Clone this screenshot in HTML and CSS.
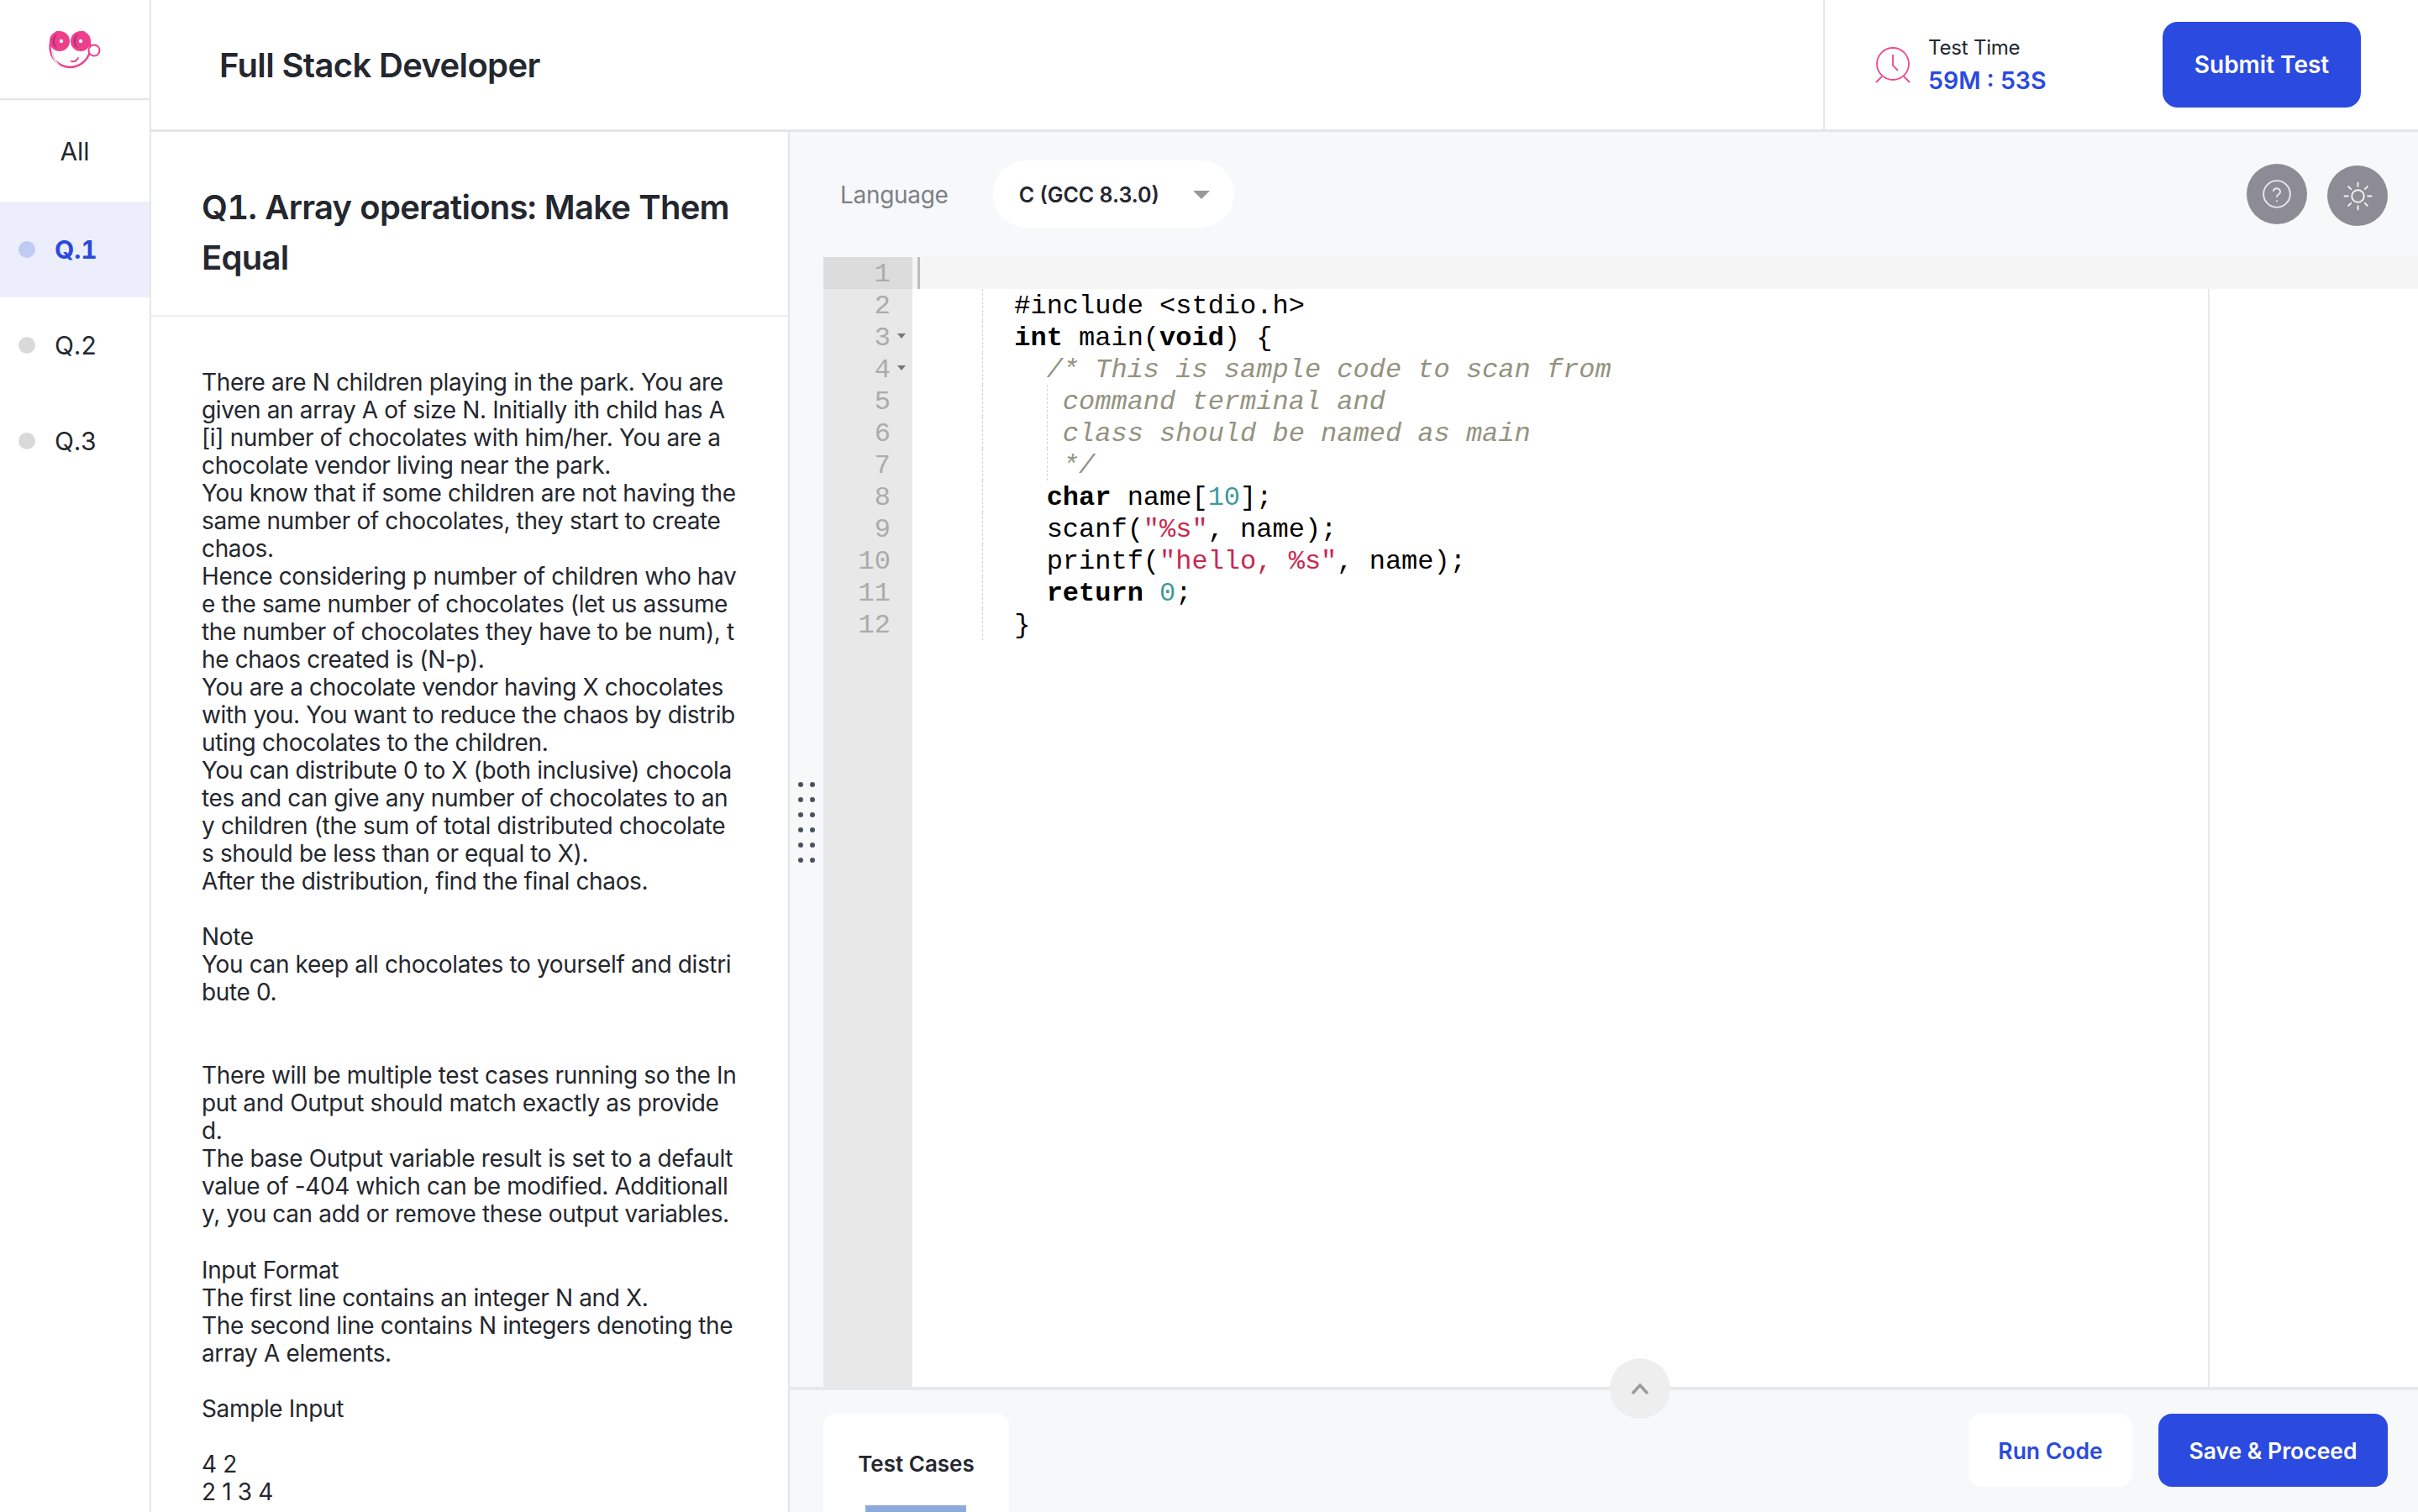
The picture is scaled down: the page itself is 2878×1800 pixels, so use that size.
FILE: index.html
```html
<!DOCTYPE html>
<html lang="en">
<head>
  <meta charset="UTF-8" />
  <title>Full Stack Developer - Test</title>
  <link rel="stylesheet" href="styles.css">
</head>
<body>
  <div class="app">
    <aside class="sidebar">
      <div class="logo">
        <svg width="62" height="45" viewBox="0 0 62 45">
          <circle cx="25.5" cy="19" r="24" fill="#fff" stroke="#ee3f8c" stroke-width="2.4" />
          <path d="M3.5 24c0 9 5 15 11 17.500c-5-4-8-10-8.500-17.500z" fill="#e4e4e4" />
          <circle cx="54" cy="23" r="6.500" fill="#fff" stroke="#ee3f8c" stroke-width="2" />
          <circle cx="13" cy="12" r="12" fill="#ee3f8c" />
          <circle cx="38" cy="12" r="12" fill="#ee3f8c" />
          <path d="M11 3a9.500 9.500 0 0 0 0 18a12 12 0 0 1 0-18z" fill="#b32f77" />
          <path d="M36 3a9.500 9.500 0 0 0 0 18a12 12 0 0 1 0-18z" fill="#b32f77" />
          <circle cx="15" cy="12" r="2.200" fill="#fff" />
          <circle cx="38" cy="12" r="2.200" fill="#fff" />
          <path d="M27 36c3 1 6-.500 8-4" fill="none" stroke="#ee3f8c" stroke-width="2" stroke-linecap="round" />
        </svg>
      </div>
      <div class="nav-all">All</div>
      <div class="nav-item active"><span class="dot"></span>Q.1</div>
      <div class="nav-item"><span class="dot"></span>Q.2</div>
      <div class="nav-item"><span class="dot"></span>Q.3</div>
    </aside>

    <div class="main">
      <header class="topbar">
        <h1 class="page-title">Full Stack Developer</h1>
        <div class="timer">
          <svg class="clock" width="42" height="44" viewBox="0 0 42 44" fill="none" stroke="#ec4a8c" stroke-width="1.800">
            <circle cx="21" cy="20" r="19" />
            <path d="M21 9v13l6 6" />
            <path d="M8 35l-7 7M34 35l7 7" />
          </svg>
          <div class="timer-text">
            <div class="timer-label">Test Time</div>
            <div class="timer-value">59M : 53S</div>
          </div>
          <button class="btn btn-primary btn-submit">Submit Test</button>
        </div>
      </header>

      <div class="workspace">
        <section class="question">
          <h2 class="question-title">Q1. Array operations: Make Them Equal</h2>
          <div class="question-body">There are N children playing in the park. You are given an array A of size N. Initially ith child has A[i] number of chocolates with him/her. You are a chocolate vendor living near the park.
You know that if some children are not having the same number of chocolates, they start to create chaos.
Hence considering p number of children who have the same number of chocolates (let us assume the number of chocolates they have to be num), the chaos created is (N-p).
You are a chocolate vendor having X chocolates with you. You want to reduce the chaos by distributing chocolates to the children.
You can distribute 0 to X (both inclusive) chocolates and can give any number of chocolates to any children (the sum of total distributed chocolates should be less than or equal to X).
After the distribution, find the final chaos.

Note
You can keep all chocolates to yourself and distribute 0.


There will be multiple test cases running so the Input and Output should match exactly as provided.
The base Output variable result is set to a default value of -404 which can be modified. Additionally, you can add or remove these output variables.

Input Format
The first line contains an integer N and X.
The second line contains N integers denoting the array A elements.

Sample Input

4 2
2 1 3 4</div>
        </section>

        <section class="editor-pane">
          <div class="drag-handle">
            <i></i><i></i><i></i><i></i><i></i><i></i><i></i><i></i><i></i><i></i><i></i><i></i>
          </div>

          <div class="toolbar">
            <span class="lang-label">Language</span>
            <div class="lang-select">C (GCC 8.3.0)<span class="caret"></span></div>
            <div class="round-btns">
              <div class="round-btn">
                <svg width="38" height="38" viewBox="0 0 24 24" fill="none" stroke="#e9e9ef" stroke-width="1.200" stroke-linecap="round">
                  <circle cx="12" cy="12" r="10" />
                  <path d="M9.400 9.500a2.700 2.700 0 0 1 5.200 .8c0 1.800-2.600 2.200-2.600 3.700" />
                  <path d="M12 17.200v.1" />
                </svg>
              </div>
              <div class="round-btn sun">
                <svg width="35" height="35" viewBox="0 0 24 24" fill="none" stroke="#f4f4f6" stroke-width="1.300" stroke-linecap="round">
                  <circle cx="12" cy="12" r="5" />
                  <path d="M12 1v3M12 20v3M4.200 4.200l2.100 2.100M17.700 17.700l2.100 2.100M1 12h3M20 12h3M4.200 19.800l2.100-2.100M17.700 6.300l2.100-2.100" />
                </svg>
              </div>
            </div>
          </div>

          <div class="editor">
            <div class="gutter">
              <div class="gutter-row current">1</div>
              <div class="gutter-row">2</div>
              <div class="gutter-row fold">3</div>
              <div class="gutter-row fold">4</div>
              <div class="gutter-row">5</div>
              <div class="gutter-row">6</div>
              <div class="gutter-row">7</div>
              <div class="gutter-row">8</div>
              <div class="gutter-row">9</div>
              <div class="gutter-row">10</div>
              <div class="gutter-row">11</div>
              <div class="gutter-row">12</div>
            </div>
            <div class="code">
              <div class="print-margin"></div>
              <div class="line line-active"><span class="cursor"></span></div>
              <div class="line"><span class="guide">    </span>  #include &lt;stdio.h&gt;</div>
              <div class="line"><span class="guide">    </span>  <b>int</b> main(<b>void</b>) {</div>
              <div class="line"><span class="guide">    </span>    <span class="cm">/* This is sample code to scan from</span></div>
              <div class="line"><span class="guide">    </span><span class="guide">    </span><span class="cm"> command terminal and</span></div>
              <div class="line"><span class="guide">    </span><span class="guide">    </span><span class="cm"> class should be named as main</span></div>
              <div class="line"><span class="guide">    </span><span class="guide">    </span><span class="cm"> */</span></div>
              <div class="line"><span class="guide">    </span>    <b>char</b> name[<span class="num">10</span>];</div>
              <div class="line"><span class="guide">    </span>    scanf(<span class="str">"%s"</span>, name);</div>
              <div class="line"><span class="guide">    </span>    printf(<span class="str">"hello, %s"</span>, name);</div>
              <div class="line"><span class="guide">    </span>    <b>return</b> <span class="num">0</span>;</div>
              <div class="line"><span class="guide">    </span>  }</div>
            </div>
          </div>

          <div class="bottom">
            <div class="collapse-btn">
              <svg width="22" height="14" viewBox="0 0 22 14" fill="none" stroke="#9a9a9a" stroke-width="3.500"><path d="M2 13l9-10 9 10" /></svg>
            </div>
            <div class="tab">Test Cases<span class="tab-bar"></span></div>
            <div class="actions">
              <button class="btn btn-white">Run Code</button>
              <button class="btn btn-primary">Save &amp; Proceed</button>
            </div>
          </div>
        </section>
      </div>
    </div>
  </div>
</body>
</html>
```

FILE: styles.css
```css
* {
  box-sizing: border-box;
}
body {
  margin: 0;
  font-family: Inter, "Noto Sans", sans-serif;
  color: #24272e;
  background: #fff;
}
.app {
  display: flex;
  height: 1800px;
  overflow: hidden;
}

/* left question list */
.sidebar {
  width: 180px;
  flex-shrink: 0;
  border-right: 2px solid #e6e6e6;
}
.logo {
  height: 119px;
  border-bottom: 2px solid #e6e6e6;
  padding: 37px 0 0 58px;
}
.logo svg {
  display: block;
}
.nav-all {
  height: 121px;
  display: flex;
  align-items: center;
  justify-content: center;
  font-size: 30px;
}
.nav-item {
  height: 114px;
  display: flex;
  align-items: center;
  gap: 23px;
  padding-left: 22px;
  font-size: 30px;
  font-variant-numeric: tabular-nums;
}
.nav-item .dot {
  width: 20px;
  height: 20px;
  border-radius: 50%;
  background: #d9d9d9;
}
.nav-item.active {
  background: #eceefb;
  color: #2b4ae0;
  font-weight: 700;
}
.nav-item.active .dot {
  background: #bfcbf3;
}

/* top bar */
.main {
  flex: 1;
  min-width: 0;
  display: flex;
  flex-direction: column;
}
.topbar {
  height: 157px;
  flex-shrink: 0;
  display: flex;
  justify-content: space-between;
  border-bottom: 3px solid #e4e5e7;
}
.page-title {
  margin: 0;
  padding-left: 81px;
  align-self: center;
  font-size: 40px;
  font-weight: 600;
  letter-spacing: -0.65px;
}
.timer {
  width: 708px;
  display: flex;
  align-items: center;
  padding-left: 60px;
  border-left: 2px solid #e6e6e6;
}
.clock {
  flex-shrink: 0;
  margin-top: 2px;
}
.timer-text {
  margin-left: 21px;
  width: 279px;
}
.timer-label {
  margin-top: 2px;
  font-size: 24px;
  line-height: 30px;
  letter-spacing: -0.2px;
}
.timer-value {
  margin-top: 6px;
  font-size: 28.5px;
  line-height: 36px;
  font-weight: 600;
  color: #2b4ae0;
}
.btn {
  border: none;
  border-radius: 16px;
  font-family: inherit;
  font-size: 26.5px;
  font-weight: 600;
  height: 87px;
}
.btn-primary {
  background: #2b4ae0;
  color: #fff;
  width: 273px;
}
.btn-white {
  background: #fff;
  color: #2b4ae0;
  width: 195px;
}
.btn-submit {
  width: 236px;
  height: 102px;
  border-radius: 18px;
  font-size: 28px;
}

/* question text */
.workspace {
  flex: 1;
  min-height: 0;
  display: flex;
}
.question {
  width: 760px;
  flex-shrink: 0;
  border-right: 2px solid #e6e6e6;
  overflow: hidden;
}
.question-title {
  margin: 0;
  padding: 60px 60px 38px;
  font-size: 40px;
  line-height: 60px;
  font-weight: 600;
  letter-spacing: -0.74px;
  font-variant-numeric: tabular-nums;
  border-bottom: 2px solid #efefef;
}
.question-body {
  padding: 62px 61px 0 60px;
  font-size: 28px;
  line-height: 33.02px;
  letter-spacing: -0.36px;
  white-space: pre-line;
  word-break: break-all;
}

/* editor side */
.editor-pane {
  position: relative;
  flex: 1;
  min-width: 0;
  display: flex;
  flex-direction: column;
  background: #f7f8fa;
}
.drag-handle {
  position: absolute;
  left: 10px;
  top: 774px;
  display: grid;
  grid-template-columns: 6px 6px;
  column-gap: 8px;
  row-gap: 12px;
}
.drag-handle i {
  width: 6px;
  height: 6px;
  border-radius: 50%;
  background: #4a5260;
}
.toolbar {
  height: 149px;
  flex-shrink: 0;
  display: flex;
  align-items: flex-start;
  padding: 34px 36px 0 60px;
}
.lang-label {
  line-height: 82px;
  font-size: 28px;
  letter-spacing: -0.3px;
  color: #7d7f85;
}
.lang-select {
  width: 287px;
  height: 80px;
  margin-left: 53px;
  padding: 2px 29px 0 31px;
  border-radius: 40px;
  background: #fff;
  display: flex;
  align-items: center;
  justify-content: space-between;
  font-size: 25px;
  font-weight: 600;
}
.caret {
  width: 0;
  height: 0;
  border-left: 10px solid transparent;
  border-right: 10px solid transparent;
  border-top: 10px solid #999;
}
.round-btns {
  margin-left: auto;
  margin-top: 4px;
  display: flex;
  gap: 24px;
}
.round-btn {
  width: 72px;
  height: 72px;
  border-radius: 50%;
  background: #8d8c94;
  display: flex;
  align-items: center;
  justify-content: center;
}
.round-btn.sun {
  margin-top: 2px;
}

.editor {
  flex: 1;
  min-height: 0;
  margin-left: 40px;
  display: flex;
  background: #fff;
  font-family: "Liberation Mono", monospace;
  font-size: 32px;
  line-height: 42px;
}
.gutter {
  width: 106px;
  flex-shrink: 0;
  background: #e8e8e8;
  color: #ababab;
  text-align: right;
}
.gutter-row {
  position: relative;
  height: 38px;
  padding-right: 26px;
}
.gutter-row.current {
  background: #dcdcdc;
}
.gutter-row.fold::after {
  content: "";
  position: absolute;
  right: 8px;
  top: 15px;
  border-left: 5px solid transparent;
  border-right: 5px solid transparent;
  border-top: 6px solid #777;
}
.code {
  position: relative;
  flex: 1;
  min-width: 0;
  color: #000;
}
.print-margin {
  position: absolute;
  left: 1542px;
  top: 0;
  bottom: 0;
  width: 2px;
  background: #e8e8e8;
}
.line {
  height: 38px;
  padding-left: 6px;
  white-space: pre;
}
.line-active {
  position: relative;
  background: #f5f5f5;
}
.cursor {
  position: absolute;
  left: 6px;
  top: 0;
  width: 3px;
  height: 38px;
  background: #bdbdbd;
}
.guide {
  display: inline-block;
  height: 38px;
  vertical-align: top;
  border-right: 1px dashed #d4d4d4;
  margin-right: -1px;
}
.line b {
  font-weight: 700;
}
.cm {
  font-style: italic;
  color: #93937f;
}
.num {
  color: #3f9a9e;
}
.str {
  color: #c9294f;
}

/* bottom bar */
.bottom {
  position: relative;
  height: 149px;
  flex-shrink: 0;
  display: flex;
  justify-content: space-between;
  border-top: 4px solid #e8e9ea;
  padding: 28px 36px 0 40px;
}
.collapse-btn {
  position: absolute;
  left: 976px;
  top: -38px;
  width: 72px;
  height: 72px;
  border-radius: 50%;
  background: #eeeeee;
  display: flex;
  align-items: center;
  justify-content: center;
}
.tab {
  position: relative;
  width: 221px;
  height: 117px;
  background: #fff;
  border-radius: 14px 14px 0 0;
  padding-top: 44px;
  text-align: center;
  font-size: 26px;
  line-height: 32px;
  font-weight: 600;
}
.tab-bar {
  position: absolute;
  left: 50px;
  bottom: 0;
  width: 120px;
  height: 8px;
  background: #8eaadd;
}
.actions {
  display: flex;
  gap: 31px;
}
```
